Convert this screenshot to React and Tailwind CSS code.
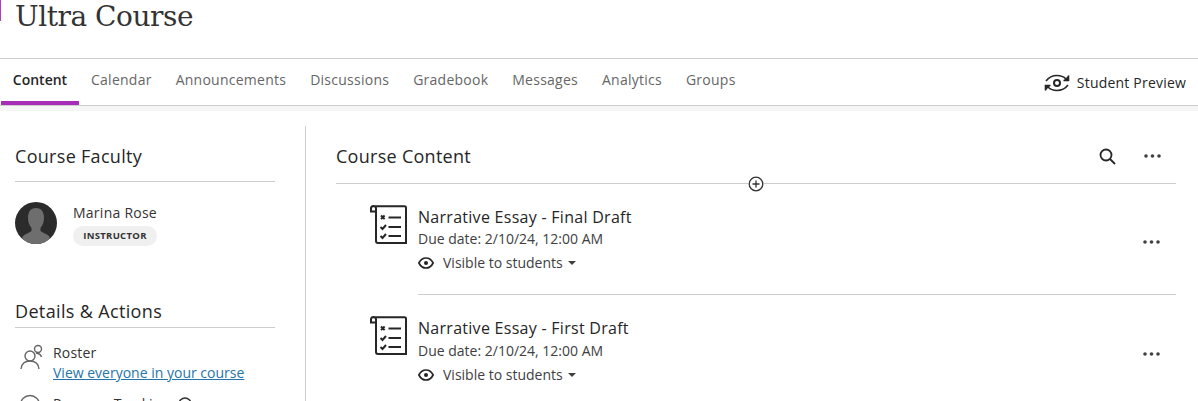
const sans = { fontFamily: '"Open Sans", sans-serif' };

function AssignmentIcon() {
  return (
    <svg width="38" height="40" viewBox="0 0 38 40" fill="none" stroke="#262626" strokeWidth="2">
      <path d="M6 7V3.500A2.300 2.300 0 0 0 1 3.500V6.500H6M3 1.200H34.500A1.500 1.500 0 0 1 36 3V38H8A2 2 0 0 1 6 36V7" />
      <path d="M11 10.500l3.600 3.600M14.600 10.500L11 14.100" strokeWidth="2" />
      <path d="M18.500 12.500H31" />
      <path d="M10.500 22l2 2 3.500-4" />
      <path d="M18.500 22H31" />
      <path d="M10.500 31l2 2 3.500-4" />
      <path d="M18.500 31H31" />
    </svg>
  );
}

function EyeIcon() {
  return (
    <svg width="16" height="12" viewBox="0 0 16 12" fill="none" stroke="#262626" strokeWidth="1.700">
      <path d="M.9 6C2.500 2.800 5 1 8 1s5.500 1.800 7.100 5C13.500 9.200 11 11 8 11S2.500 9.200.9 6Z" />
      <circle cx="8" cy="6" r="2" fill="#262626" stroke="none" />
    </svg>
  );
}

function Dots() {
  return (
    <svg width="17" height="4" viewBox="0 0 17 4" fill="#404040">
      <circle cx="2" cy="2" r="1.800" />
      <circle cx="8.500" cy="2" r="1.800" />
      <circle cx="15" cy="2" r="1.800" />
    </svg>
  );
}

function Item({ title, lower }) {
  return (
    <div className="flex h-[110px] items-start">
      <div className="ml-[34px] mt-[21px] w-[48px] shrink-0">
        <AssignmentIcon />
      </div>
      <div className="flex-1 pt-[22px]">
        <div className="text-[16px] leading-[22px] tracking-[0.28px] text-[#262626]" style={{ fontWeight: 500 }}>{title}</div>
        <div className={lower ? "text-[14px] leading-[20px] mt-[2px] text-[#404040]" : "text-[14px] leading-[20px] mt-[1px] text-[#404040]"}>Due date: 2/10/24, 12:00 AM</div>
        <div className="flex items-center mt-[4px] text-[14px] leading-[20px] text-[#404040]">
          <EyeIcon />
          <span className="ml-[9px]">Visible to students</span>
          <span className="ml-[5px] w-0 h-0 border-x-[4px] border-x-transparent border-t-[4px] border-t-[#404040]" />
        </div>
      </div>
      <div className={lower ? "mt-[57px] mr-[16px]" : "mt-[56px] mr-[16px]"}>
        <Dots />
      </div>
    </div>
  );
}

export default function App() {
  const tabs = ["Calendar", "Announcements", "Discussions", "Gradebook", "Messages", "Analytics", "Groups"];
  return (
    <div className="w-[1198px] h-[401px] overflow-hidden bg-white relative" style={sans}>
      <div className="h-[58px] relative">
        <div className="absolute left-0 top-0 w-px h-[21px] bg-[#b23cc0]" />
        <h1 className="pl-[15px] text-[28px] leading-[34px] text-[#333333] font-normal" style={{ fontFamily: '"DejaVu Serif", serif', letterSpacing: "-0.45px" }}>Ultra Course</h1>
      </div>
      <div className="h-[48px] border-y border-[#cdcdcd] flex items-stretch text-[14px] pl-px">
        <div className="w-[78px] relative flex justify-center pt-[10px] font-semibold text-[#262626]">
          Content
          <div className="absolute left-0 right-0 bottom-0 h-1 bg-[#a72db8]" />
        </div>
        <div className="flex gap-[24px] pl-[12px] pt-[10px] text-[#666666] font-medium tracking-[0.25px]">
          {tabs.map((t) => <span key={t}>{t}</span>)}
        </div>
        <div className="ml-auto flex items-center pr-[12px] pt-[1px] text-[#262626] font-medium tracking-[0.2px]">
          <svg width="26" height="20" viewBox="0 0 26 20" fill="none" stroke="#262626" strokeWidth="1.600" className="mr-[7px]">
            <path d="M2 8C5 4 9 2.500 13 2.500c3.500 0 6.500 1 9 3.500" />
            <path d="M24.500 2.500V7.500H19.500" fill="#262626" />
            <path d="M24 12c-3 4-7 5.500-11 5.500-3.500 0-6.500-1-9-3.500" />
            <path d="M1.500 17.500V12.500H6.500" fill="#262626" />
            <circle cx="13" cy="10" r="3" strokeWidth="2" />
          </svg>
          Student Preview
        </div>
      </div>
      <div className="h-[5px] bg-[#f5f5f5]" />
      <div className="flex h-[295px]">
        <aside className="w-[306px] shrink-0 border-r border-[#cdcdcd] mt-[15px] pl-[15px] pr-[30px]">
          <h2 className="text-[18px] leading-[24px] pt-[18px] pb-[13px] tracking-[0.3px] border-b border-[#cdcdcd] font-medium text-[#262626]">Course Faculty</h2>
          <div className="flex mt-[20px]">
            <div className="w-[42px] h-[42px] rounded-full overflow-hidden shrink-0">
              <svg width="42" height="42" viewBox="0 0 42 42">
                <rect width="42" height="42" fill="#2b2b2b" />
                <path d="M21 6c5.500 0 8 4 8 10 0 5-2 8-3.500 10v3c3 2 7 3.500 9 5.500v8H7.500v-8c2-2 6-3.500 9-5.500v-3C15 24 13 21 13 16c0-6 2.500-10 8-10Z" fill="#6e6e6e" />
              </svg>
            </div>
            <div className="ml-[16px]">
              <div className="text-[14px] leading-[20px] tracking-[0.25px] text-[#333333] mt-[1px]">Marina Rose</div>
              <div className="mt-[3px] h-[20px] w-[84px] rounded-full bg-[#f0f0f0] flex items-center justify-center text-[9.500px] font-bold tracking-[0.3px] text-[#333333]">INSTRUCTOR</div>
            </div>
          </div>
          <h2 className="mt-[53px] text-[18px] leading-[24px] pb-[4px] tracking-[0.35px] border-b border-[#cdcdcd] font-medium text-[#262626]">Details &amp; Actions</h2>
          <div className="flex mt-[15px]">
            <div className="ml-[4px] mt-[1px] shrink-0 w-[27px] flex flex-col gap-[24px]">
              <svg width="26" height="26" viewBox="0 0 26 26" fill="none" stroke="#666666" strokeWidth="1.400">
                <circle cx="11" cy="12" r="5" />
                <path d="M2 25c.5-5 3-8 9-8s8.500 3 9 8" />
                <circle cx="19" cy="5" r="3.500" />
                <path d="M17 9c3 .500 5 1.500 5.500 4" />
              </svg>
              <svg width="22" height="22" viewBox="0 0 22 22" fill="none" stroke="#666666" strokeWidth="1.400">
                <circle cx="11" cy="11" r="9.500" />
              </svg>
            </div>
            <div className="ml-[7px] text-[14px] leading-[20px]">
              <div className="text-[#333333] tracking-[0.2px]">Roster</div>
              <a className="text-[#2574a9] underline block">View everyone in your course</a>
              <div className="flex items-center mt-[11px] text-[#333333] whitespace-nowrap">
                <span>Progress Tracking</span>
                <svg width="14" height="14" viewBox="0 0 14 14" fill="none" stroke="#333333" strokeWidth="1.500" className="ml-[9px]">
                  <circle cx="7" cy="7" r="6" />
                </svg>
              </div>
            </div>
          </div>
        </aside>
        <main className="flex-1 pl-[30px] pr-[22px] mt-[15px] min-w-0">
          <div className="relative h-[58px] border-b border-[#cdcdcd] flex items-center justify-between">
            <h2 className="text-[18px] font-medium tracking-[0.28px] text-[#262626] mt-[4px]">Course Content</h2>
            <div className="flex items-center gap-[28px] pr-[15px] mt-[3px]">
              <svg width="17" height="17" viewBox="0 0 17 17" fill="none" stroke="#262626" strokeWidth="1.800">
                <circle cx="7" cy="7" r="5.500" />
                <path d="M11 11l5 5" />
              </svg>
              <Dots />
            </div>
            <div className="absolute left-[412px] top-[50px] w-[16px] h-[16px] bg-white rounded-full">
              <svg width="16" height="16" viewBox="0 0 16 16" fill="none" stroke="#333333" strokeWidth="1.300">
                <circle cx="8" cy="8" r="6.800" />
                <path d="M8 4.500v7M4.500 8h7" />
              </svg>
            </div>
          </div>
          <Item title="Narrative Essay - Final Draft" />
          <div className="ml-[82px] border-t border-[#cdcdcd]" />
          <Item title="Narrative Essay - First Draft" lower />
        </main>
      </div>
    </div>
  );
}
